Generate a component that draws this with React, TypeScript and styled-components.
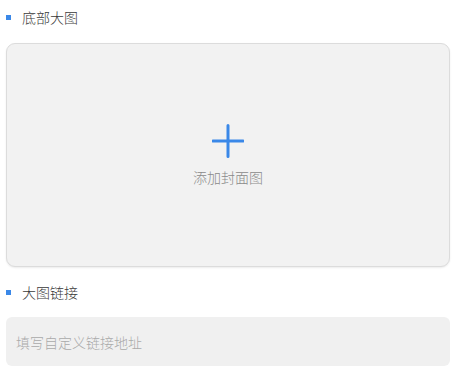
import React from "react";
import styled, { createGlobalStyle } from "styled-components";

const GlobalStyle = createGlobalStyle`
  html, body {
    margin: 0;
    padding: 0;
    background: #ffffff;
    font-family: "Noto Sans CJK SC", "Microsoft YaHei", sans-serif;
  }
`;

const colors = {
  Blue: "#3a88e8",
  Label: "#3a3a3a",
  Hint: "#8a8a8a",
  Placeholder: "#aaaaaa",
  Bg1: "#f2f2f2",
  Border: "#dcdcdc",
};

const Page = styled.div`
  width: 460px;
  padding: 7px 10px 0 6px;
  box-sizing: border-box;
`;

const Section = styled.div`
  display: flex;
  flex-direction: column;
`;

const Label = styled.div<{ $gap?: number }>`
  display: flex;
  align-items: center;
  height: 20px;
  font-size: 14px;
  font-weight: 300;
  color: ${colors.Label};
  margin-bottom: ${(props) => (props.$gap ? props.$gap : 16)}px;
`;

const Dot = styled.span`
  width: 5px;
  height: 5px;
  background: ${colors.Blue};
  margin-right: 11px;
`;

const UploadBox = styled.div`
  height: 224px;
  margin-bottom: 15px;
  border: 1px solid ${colors.Border};
  border-radius: 9px;
  background: ${colors.Bg1};
  box-shadow: 0 1px 2px rgba(0, 0, 0, 0.08);
  display: flex;
  flex-direction: column;
  align-items: center;
  justify-content: center;
  cursor: pointer;
  box-sizing: border-box;
`;

const PlusIcon = styled.svg`
  width: 32px;
  height: 34px;
`;

const Hint = styled.div`
  margin-top: 9px;
  font-size: 14px;
  font-weight: 300;
  line-height: 20px;
  color: ${colors.Hint};
`;

const Input = styled.input`
  height: 49px;
  border: none;
  outline: none;
  border-radius: 6px;
  background: #f0f0f0;
  padding: 0 10px;
  font-family: inherit;
  font-size: 14px;
  font-weight: 300;
  color: ${colors.Label};
  box-sizing: border-box;
  width: 100%;
  &::placeholder {
    color: ${colors.Placeholder};
  }
`;

export default function App() {
  return (
    <>
      <GlobalStyle />
      <Page>
        <Section>
          <Label>
            <Dot />
            底部大图
          </Label>
          <UploadBox>
            <PlusIcon viewBox="0 0 32 34">
              <path
                d="M16 1.5 V32.5 M1 17 H31"
                stroke={colors.Blue}
                strokeWidth="3"
                strokeLinecap="round"
                fill="none"
              />
            </PlusIcon>
            <Hint>添加封面图</Hint>
          </UploadBox>
        </Section>
        <Section>
          <Label $gap={15}>
            <Dot />
            大图链接
          </Label>
          <Input placeholder="填写自定义链接地址" />
        </Section>
      </Page>
    </>
  );
}
